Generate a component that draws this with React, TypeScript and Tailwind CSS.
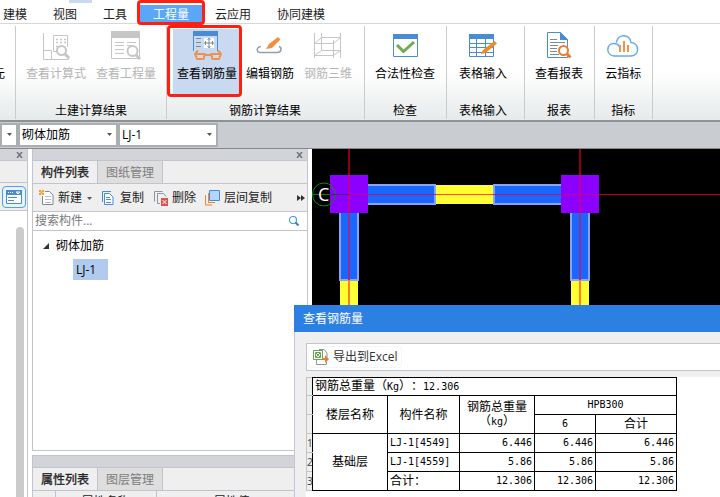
import type { ReactNode } from "react";

const GREY = "#c6c6c6";
const BLUE = "#4a8bd6";
const ORANGE = "#f0924a";

function Icon({ children }: { children: ReactNode }) {
  return (
    <svg width="32" height="32" viewBox="0 0 32 32" fill="none" aria-hidden="true">
      {children}
    </svg>
  );
}

const formulaIcon = (
  <Icon>
    <path d="M3.500 3v26.500h25V26M4 20.500h7.500V29M19 21.500h-5.500v-16h14V17" stroke={GREY} />
    <path d="M16 9.500h2M20 9.500h2M24 9.500h2M16 12.500h2M20 12.500h2M24 12.500h2M16 16.500h2" stroke={GREY} strokeWidth="1.500" />
    <circle cx="21.500" cy="20.500" r="4.500" fill="#fff" stroke={GREY} strokeWidth="2" />
    <path d="M25 24l4 4" stroke={GREY} strokeWidth="3" />
  </Icon>
);

const quantityIcon = (
  <Icon>
    <path d="M1 1h29v7H1z" fill={GREY} />
    <path d="M1.500 8v20.500h28V8M5 12.500h9M17 12.500h9M5 15.500h9M5 19.500h9M5 23.500h9M17 15.500h4" stroke={GREY} />
    <circle cx="22.500" cy="21" r="5" fill="#fff" stroke={GREY} strokeWidth="2" />
    <path d="M26 25l4 4" stroke={GREY} strokeWidth="3" />
  </Icon>
);

const viewRebarIcon = (
  <Icon>
    <path d="M2 1h25v5H2z" fill={BLUE} />
    <path d="M2.500 6v15M26.500 6v15" stroke={BLUE} />
    <path d="M5 8.500h5M5 12.500h5M5 16.500h5" stroke="#7d8a94" />
    <path d="M13 8h10v10H13z" fill="#fff" />
    <path d="M13 13h10M18 8v10M14.500 11v4M21.500 11v4M16.500 9.500l1.500-1 1.500 1M16.500 16.500l1.500 1 1.500-1" stroke="#7d8a94" />
    <path
      d="M4 24h10l-1.500 5H6zM20 24h10l-2 5h-6.500zM14 25h6M4 24l3-3.500M30 24l-3-3.500"
      stroke={ORANGE}
      strokeWidth="2"
      strokeLinejoin="round"
    />
  </Icon>
);

const editRebarIcon = (
  <Icon>
    <path d="M7 16.500C2 17 2 22.500 7 22.500h16c5 0 5-5 2-6" stroke="#93a1ac" strokeWidth="1.500" />
    <path d="M12 19l3-5L24 7l2.500 2.500L18 18z" fill="#f08f43" />
  </Icon>
);

const rebar3dIcon = (
  <Icon>
    <path
      d="M2.500 3v25M9.500 3v18M21.500 10v18M28.500 3v25M9 7.500h20M2 13.500h20M9 20.500h20M2 25.500h20M2.500 13.500l7-6M21.500 13.500l7-6M2.500 25.500l7-5M21.500 25.500l7-5"
      stroke={GREY}
    />
  </Icon>
);

const checkIcon = (
  <Icon>
    <path d="M4.500 4.500h24v22h-24z" fill="#fff" stroke={BLUE} />
    <path d="M4 4h25v5H4z" fill={BLUE} />
    <path d="M8 15l6.500 6.500L25 12" stroke="#6fab50" strokeWidth="3" />
  </Icon>
);

const tableIcon = (
  <Icon>
    <path d="M2.500 4.500h24v22h-24z" fill="#fff" stroke={BLUE} />
    <path d="M2 4h25v5H2z" fill={BLUE} />
    <path d="M2 13.500h25M2 17.500h25M2 22.500h25M9.500 9v18M18.500 9v18" stroke={BLUE} />
    <path d="M14 24l2-4L27.500 11l2.500 2.500L18.500 23z" fill="#ef8d1c" />
  </Icon>
);

const reportIcon = (
  <Icon>
    <path d="M4.500 2.500h13l7 7v18h-20z" fill="#fff" stroke={BLUE} />
    <path d="M17 2l8 8h-8z" fill={BLUE} />
    <path d="M7 9.500h7M7 12.500h15M7 15.500h8M7 18.500h7M7 21.500h7M7 24.500h9" stroke="#7d8a94" />
    <circle cx="20.500" cy="20.500" r="4.500" fill="#fff" stroke="#ee7b30" strokeWidth="2" />
    <path d="M24 24l3.500 3.500" stroke="#ee7b30" strokeWidth="3" />
  </Icon>
);

const cloudIcon = (
  <Icon>
    <path
      d="M9.500 12C11 3.500 22.500 3.500 24 12.500c8.500.5 9 13 0 13.500H7C-1.500 25-1 13.500 7 13.500c2.500 0 4 .8 5 2.500"
      stroke="#62aaf3"
      strokeWidth="1.500"
      strokeLinecap="round"
    />
    <path d="M13 15v7M17 11v11M21 15v7" stroke={ORANGE} strokeWidth="2" />
  </Icon>
);

function Tool({ label, icon, disabled, active }: { label: string; icon: ReactNode; disabled?: boolean; active?: boolean }) {
  return (
    <button
      type="button"
      disabled={disabled}
      className={
        "relative flex h-[66px] flex-col items-center whitespace-nowrap pt-px " +
        (active ? "bg-[#c9daf0] px-1 " : "px-[5px] ") +
        (disabled ? "text-[#b4b4b4]" : "text-black")
      }
    >
      {icon}
      <span className="mt-1 leading-4">{label}</span>
      {active && <span className="absolute -top-1 -right-px -bottom-[2px] -left-[6px] z-10 rounded-sm border-3 border-[#ff1f12]" />}
    </button>
  );
}

function Group({ label, pad = "pl-[5px] pr-[6px]", children }: { label: string; pad?: string; children: ReactNode }) {
  return (
    <section className={"flex shrink-0 flex-col items-center justify-between border-r border-[#c9cbcd] pt-[3px] " + pad}>
      <div className="flex">{children}</div>
      <h2 className="leading-4">{label}</h2>
    </section>
  );
}

function Combo({ label, value, className }: { label: string; value: string; className: string }) {
  return (
    <div className={"relative h-6 " + className}>
      <select aria-label={label} className="h-full w-full appearance-none border-2 border-[#abaeb1] bg-white pl-[2px] text-black outline-none">
        {value && <option>{value}</option>}
      </select>
      <svg className="pointer-events-none absolute top-[10px] right-[6px]" width="5" height="3" aria-hidden="true">
        <path d="M0 0h5L2.500 3z" fill="#555" />
      </svg>
    </div>
  );
}

function TitleStrip({ closable = true }: { closable?: boolean }) {
  return (
    <div className="flex h-3 shrink-0 items-center justify-end border-b border-[#c2c4cd] bg-[#d3d4da] pr-1">
      {closable && (
        <button type="button" aria-label="关闭">
          <svg width="7" height="6" viewBox="0 0 7 6" aria-hidden="true">
            <path d="M1 0l5 6M6 0L1 6" stroke="#6f7278" strokeWidth="1.500" />
          </svg>
        </button>
      )}
    </div>
  );
}

function Tabs({ active, other }: { active: string; other: string }) {
  return (
    <div className="flex h-[23px] shrink-0 border-b border-[#c2c4cd] bg-[#efefef]" role="tablist">
      <button type="button" role="tab" aria-selected="true" className="w-16 pt-[2px] text-[#222] [-webkit-text-stroke:0.3px]">
        {active}
      </button>
      <button type="button" role="tab" aria-selected="false" className="w-[66px] border-x border-[#c2c4cd] bg-[#dedede] pt-[2px] text-[#7d7d7d]">
        {other}
      </button>
    </div>
  );
}

function Action({ label, icon, children }: { label: string; icon: ReactNode; children?: ReactNode }) {
  return (
    <button type="button" className="flex shrink-0 items-center gap-1">
      {icon}
      <span>{label}</span>
      {children}
    </button>
  );
}

function SmallIcon({ children }: { children: ReactNode }) {
  return (
    <svg width="15" height="16" viewBox="0 0 15 16" fill="none" aria-hidden="true">
      {children}
    </svg>
  );
}

function Drawing() {
  return (
    <svg className="h-full w-full bg-black" aria-label="模型视图">
      <g fill="#ffff33">
        <path d="M124 36h57v19h-57zM28 132h18v60H28zM259 132h18v60h-18z" />
      </g>
      <g fill="#1a66ff" stroke="#86a5f8" strokeWidth="2">
        <path d="M55 36h68v19H55zM182 36h68v19h-68zM28 63h18v68H28zM259 63h18v68h-18z" />
      </g>
      <path d="M18 26h38v38H18zM249 26h38v38h-38z" fill="#8b00ff" />
      <path d="M37 0v26M268 0v26" stroke="#8a000c" strokeWidth="2" />
      <path d="M37 26v38M268 26v38" stroke="#c20096" strokeWidth="2" />
      <path d="M37 64v67M268 64v67" stroke="#93308f" strokeWidth="2" />
      <path d="M37 131v61M268 131v61" stroke="#ff8020" strokeWidth="2" />
      <path d="M37 45.500h19M249 45.500h38" stroke="#c20096" />
      <path d="M56 45.500h68M181 45.500h68" stroke="#b01878" />
      <path d="M124 45.500h57" stroke="#ff4a18" />
      <path d="M287 45.500h2000" stroke="#bd0008" />
      <circle cx="12" cy="45.500" r="11.500" stroke="#0a8a0a" fill="none" />
      <path d="M0 45.500h18" stroke="#0a7a0a" />
      <path d="M18 45.500h19" stroke="#3a3060" />
      <text x="6" y="52" fill="#fff" fontSize="18" fontFamily="'Open Sans', sans-serif">
        C
      </text>
    </svg>
  );
}

const rows = [
  ["1", "LJ-1[4549]", "6.446", "6.446", "6.446"],
  ["2", "LJ-1[4559]", "5.86", "5.86", "5.86"],
  ["3", "合计：", "12.306", "12.306", "12.306"],
];

const cell = "h-[19px] border border-black p-0 font-normal";
const mono = "font-['DejaVu_Sans_Mono',monospace] text-[10px]";
const edge = "border border-[#c4c4c4] border-r-black bg-[#efefef] p-0 font-normal";

function ResultTable() {
  return (
    <table className="w-[371px] table-fixed border-collapse bg-white text-[12px] leading-[14px] text-black [text-spacing-trim:space-all]">
      <colgroup>
        <col className="w-[6px]" />
        <col className="w-[75px]" />
        <col className="w-[72px]" />
        <col className="w-[75px]" />
        <col className="w-[61px]" />
        <col className="w-[81px]" />
      </colgroup>
      <thead>
        <tr className="h-[18px]">
          <td className={edge} />
          <th colSpan={5} className="border border-black p-0 pl-[2px] text-left font-normal">
            钢筋总重量（<span className={mono}>Kg</span>）：<span className={mono}>12.306</span>
          </th>
        </tr>
        <tr>
          <td className={edge} />
          <th rowSpan={2} className={cell}>楼层名称</th>
          <th rowSpan={2} className={cell}>构件名称</th>
          <th rowSpan={2} className={cell}>
            钢筋总重量
            <br />（<span className={mono}>kg</span>）
          </th>
          <th colSpan={2} className={cell + " " + mono}>HPB300</th>
        </tr>
        <tr>
          <td className={edge} />
          <th className={cell + " " + mono}>6</th>
          <th className={cell}>合计</th>
        </tr>
      </thead>
      <tbody>
        {rows.map(([n, name, total, six, sum], i) => (
          <tr key={n}>
            <th className={edge + " text-left text-[10px] text-[#444]"}>{n}</th>
            {i === 0 && (
              <td rowSpan={3} className={cell + " text-center"}>
                基础层
              </td>
            )}
            <td className={cell + " pl-[2px] " + (i < 2 ? mono : "")}>{name}</td>
            {[total, six, sum].map((v, k) => (
              <td key={k} className={cell + " pr-[2px] text-right " + mono}>
                {v}
              </td>
            ))}
          </tr>
        ))}
      </tbody>
    </table>
  );
}

export default function App() {
  return (
    <div className="relative flex h-screen flex-col overflow-hidden bg-white font-['Open_Sans','Noto_Sans_CJK_SC',sans-serif] text-[12px] leading-4 text-[#222]">
      <nav className="relative flex h-6 shrink-0 items-end gap-[26px] border-b border-[#d5d7d9] pl-[3px] whitespace-nowrap">
        <span className="absolute top-0 left-[69px] h-[3px] w-[23px] bg-[#c9daf0]" />
        <button type="button" className="h-[18px] pt-[2px]">建模</button>
        <button type="button" className="h-[18px] pt-[2px]">视图</button>
        <button type="button" className="h-[18px] pt-[2px]">工具</button>
        <button type="button" className="relative -mx-[13px] h-[18px] w-[62px] bg-[#5aa7f8] pt-[2px] text-white">
          工程量
          <span className="absolute -inset-x-[3px] -top-[5px] -bottom-[2px] z-10 rounded-sm border-3 border-[#ff1f12]" />
        </button>
        <button type="button" className="h-[18px] pt-[2px]">云应用</button>
        <button type="button" className="h-[18px] pt-[2px]">协同建模</button>
      </nav>

      <header className="flex h-[98px] shrink-0 border-b-2 border-[#8f9294] bg-linear-to-b from-white from-50% to-[#e6eaea] pt-[2px] pb-px text-black">
        <div className="flex w-4 shrink-0 justify-end border-r border-[#c9cbcd] pt-10 pr-[10px]">元</div>
        <Group label="土建计算结果" pad="px-[5px]">
          <Tool label="查看计算式" icon={formulaIcon} disabled />
          <Tool label="查看工程量" icon={quantityIcon} disabled />
        </Group>
        <Group label="钢筋计算结果" pad="pl-[6px] pr-[7px]">
          <Tool label="查看钢筋量" icon={viewRebarIcon} active />
          <Tool label="编辑钢筋" icon={editRebarIcon} />
          <Tool label="钢筋三维" icon={rebar3dIcon} disabled />
        </Group>
        <Group label="检查">
          <Tool label="合法性检查" icon={checkIcon} />
        </Group>
        <Group label="表格输入" pad="pl-[7px] pr-3">
          <Tool label="表格输入" icon={tableIcon} />
        </Group>
        <Group label="报表">
          <Tool label="查看报表" icon={reportIcon} />
        </Group>
        <Group label="指标">
          <Tool label="云指标" icon={cloudIcon} />
        </Group>
      </header>

      <div className="flex h-[27px] shrink-0 items-center border-b border-[#85898c] bg-[#c9ccd0]">
        <Combo label="楼层" value="" className="w-[18px]" />
        <Combo label="构件类型" value="砌体加筋" className="w-[100px]" />
        <Combo label="构件" value="LJ-1" className="w-[100px]" />
      </div>

      <main className="flex min-h-0 flex-1">
        <aside className="flex w-7 shrink-0 flex-col border-r border-[#c2c4cd]">
          <TitleStrip />
          <div className="h-[22px] border-b border-[#c2c4cd] bg-[#efefef]" />
          <div className="flex h-[28px] items-center justify-center border-b border-[#c2c4cd] bg-[#efefef]">
            <button type="button" aria-label="构件" className="flex h-[22px] w-6 items-center justify-center rounded border border-[#4d9fef] bg-[#eaf4ff]">
              <svg width="16" height="14" viewBox="0 0 16 14" fill="none" aria-hidden="true">
                <path d="M.5.5h15v13H.5z" fill="#fff" stroke={BLUE} />
                <path d="M0 0h16v5H0z" fill={BLUE} />
                <path d="M2 2.500h1M4 2.500h1M6 2.500h1M10 2h4l-2 2z" stroke="#fff" />
                <path d="M2 7.500h9M2 10.500h6" stroke={BLUE} />
              </svg>
            </button>
          </div>
          <div className="flex min-h-0 flex-1 justify-end pt-4 pr-[3px]">
            <span className="w-2 rounded-t bg-[#cbcbcb]" />
          </div>
        </aside>

        <div className="ml-1 flex w-[276px] shrink-0 flex-col">
          <section className="flex min-h-0 flex-1 flex-col border border-t-0 border-[#c2c4cd]">
            <TitleStrip />
            <Tabs active="构件列表" other="图纸管理" />
            <div className="flex h-7 shrink-0 items-center gap-[9px] border-b border-[#c2c4cd] bg-[#efefef] pt-px pl-[6px] whitespace-nowrap">
              <Action
                label="新建"
                icon={
                  <SmallIcon>
                    <path d="M3.500 6v8.500h10.500V5L10.500 1.500H6" fill="#fff" stroke="#7d8a94" />
                    <path d="M6 6.500h6M6 9.500h6M6 12.500h6" stroke="#b8bec3" />
                    <path d="M0 0h2v2H0zM3 0h2v2H3zM1.500 1.500h2v2h-2zM0 3h2v2H0zM3 3h2v2H3z" fill="#f0a030" />
                  </SmallIcon>
                }
              >
                <svg className="ml-px" width="5" height="3" aria-hidden="true">
                  <path d="M0 0h5L2.500 3z" fill="#555" />
                </svg>
              </Action>
              <Action
                label="复制"
                icon={
                  <SmallIcon>
                    <path d="M1.500 12V1.500H10" stroke={BLUE} />
                    <path d="M3.500 3.500h5l3.500 3.500v7.500H3.500z" fill="#fff" stroke={BLUE} />
                    <path d="M5 7.500h4M5 9.500h5M5 12.500h5" stroke={BLUE} />
                  </SmallIcon>
                }
              />
              <Action
                label="删除"
                icon={
                  <SmallIcon>
                    <path d="M1.500 11.500V1.500h8M7 13.500H4.500v-10h6l2.500 3" stroke="#8a989e" />
                    <path d="M8 8h7v8H8z" fill="#d9534f" />
                    <path d="M9.500 10l4 4M13.500 10l-4 4" stroke="#fff" />
                  </SmallIcon>
                }
              />
              <Action
                label="层间复制"
                icon={
                  <SmallIcon>
                    <path d="M.5 5v10H7M3.500 3v9.500H10" stroke="#e8873a" />
                    <path d="M4.500.5h10v10h-10z" fill="#b4d5fb" stroke={BLUE} />
                  </SmallIcon>
                }
              />
              <button type="button" aria-label="更多" className="mr-[2px] ml-auto">
                <svg width="8" height="6" aria-hidden="true">
                  <path d="M0 0l4 3-4 3zM4 0l4 3-4 3z" fill="#333" />
                </svg>
              </button>
            </div>
            <div className="flex h-[19px] shrink-0 items-center border-b border-[#c2c4cd] pr-2 pl-[2px]">
              <input type="search" aria-label="搜索构件" placeholder="搜索构件..." className="min-w-0 flex-1 bg-transparent outline-none placeholder:text-[#7a7a7a]" />
              <svg width="10" height="10" viewBox="0 0 10 10" fill="none" aria-hidden="true">
                <circle cx="4" cy="4" r="3.500" stroke="#4aa0d8" strokeWidth="1.200" />
                <path d="M6.500 6.500l3 3" stroke="#2b86c8" strokeWidth="2" />
              </svg>
            </div>
            <ul className="pt-[3px] text-black">
              <li>
                <div className="flex h-6 items-center gap-[7px] pl-[10px]">
                  <svg width="6" height="6" aria-hidden="true">
                    <path d="M6 0v6H0z" fill="#333" />
                  </svg>
                  砌体加筋
                </div>
                <div className="mt-px ml-10 flex h-[21px] w-[35px] items-center bg-[#b0cbee] pl-[3px]">LJ-1</div>
              </li>
            </ul>
          </section>

          <section className="mt-1 h-[42px] shrink-0 overflow-hidden border border-b-0 border-[#c2c4cd]">
            <TitleStrip closable={false} />
            <Tabs active="属性列表" other="图层管理" />
            <table className="w-full table-fixed border-collapse bg-[#efefef]">
              <thead>
                <tr>
                  <th className="w-[22px] border-r border-[#c2c4cd]" />
                  <th className="w-[101px] border-r border-[#c2c4cd] p-0 pt-[3px] font-normal">属性名称</th>
                  <th className="p-0 pt-[3px] font-normal">属性值</th>
                </tr>
              </thead>
            </table>
          </section>
        </div>

        <div className="ml-1 min-w-0 flex-1">
          <Drawing />
        </div>
      </main>

      <section
        role="dialog"
        aria-label="查看钢筋量"
        className="absolute top-[305px] right-0 bottom-0 left-[294px] z-20 flex flex-col border-l border-[#c2c6d8] bg-[#efefef]"
      >
        <h1 className="-ml-px flex h-[27px] shrink-0 items-center bg-[#2c80e2] pl-[9px] text-white">查看钢筋量</h1>
        <div className="mt-[11px] ml-[11px] flex h-7 shrink-0 items-center border border-r-0 border-[#c2c4cd] bg-white pl-px">
          <button type="button" className="flex h-[22px] items-center gap-1 rounded border border-[#f5f5f5] px-1">
            <svg width="16" height="16" viewBox="0 0 16 16" fill="none" aria-hidden="true">
              <path d="M3.500 11v4.500h10V13M6 .5h5l3 3.500v4" stroke="#8a989e" />
              <path d="M.5 1.500h9v9h-9z" fill="#fff" stroke="#65a34c" />
              <path d="M2.500 3.500h5v5h-5zM3 4l4 4M7 4L3 8" stroke="#65a34c" />
              <path d="M9 9h3V6l4 4-4 4v-3H9z" fill="#ee7b30" />
            </svg>
            <span className="text-[#333]">导出到Excel</span>
          </button>
        </div>
        <div className="mt-[6px] ml-[11px] min-h-0 flex-1 overflow-hidden bg-white">
          <ResultTable />
        </div>
      </section>
    </div>
  );
}
